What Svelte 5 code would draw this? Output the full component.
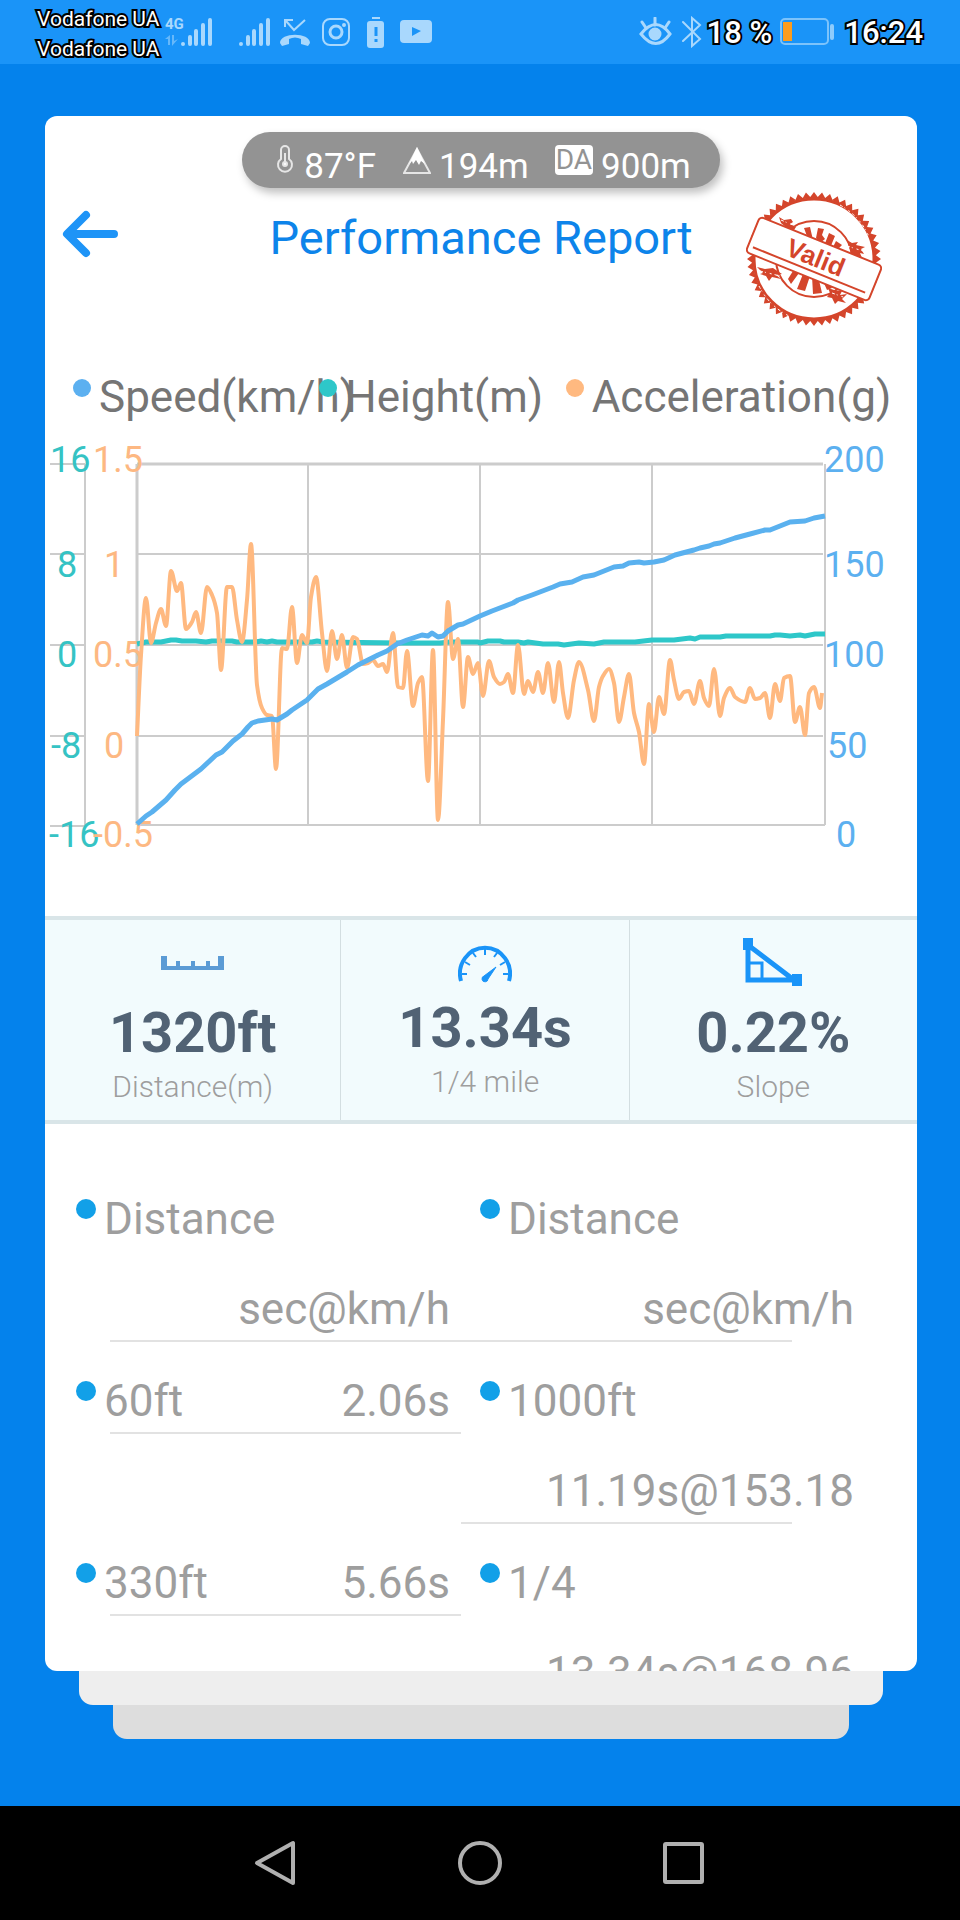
<script lang="ts">
  type Point = [number, number];

  const legend = [
    { label: 'Speed(km/h)', tone: 'speed' },
    { label: 'Height(m)', tone: 'height' },
    { label: 'Acceleration(g)', tone: 'accel' },
  ];

  const rows = [
    [{ label: '60ft', value: '2.06s' }, { label: '1000ft', value: '11.19s@153.18' }],
    [{ label: '330ft', value: '5.66s' }, { label: '1/4', value: '13.34s@168.96' }],
  ];

  // one entry per horizontal grid line, top to bottom
  const ticks = [
    { y: 472, height: ['16', 50], accel: ['1.5', 93], speed: ['200', 824] },
    { y: 577, height: ['8', 57], accel: ['1', 104], speed: ['150', 824] },
    { y: 667, height: ['0', 57], accel: ['0.5', 93], speed: ['100', 824] },
    { y: 758, height: ['-8', 51], accel: ['0', 104], speed: ['50', 827] },
    { y: 847, height: ['-16', 49], accel: ['-0.5', 93], speed: ['0', 836] },
  ];

  const speed: Point[] = [
    [137, 824], [146, 816], [152, 812], [166, 800], [175, 790], [181, 784], [201, 769], [216, 755],
    [222, 752], [233, 741], [242, 734], [248, 727], [252, 723], [258, 721], [272, 719], [277, 720],
    [287, 714], [292, 710], [307, 700], [312, 695], [318, 689], [327, 684], [337, 678], [347, 672],
    [358, 665], [368, 660], [378, 655], [387, 651], [397, 644], [407, 640], [413, 638], [422, 635],
    [428, 636], [432, 633], [438, 637], [443, 636], [448, 631], [458, 625], [463, 624], [480, 616],
    [492, 611], [513, 603], [518, 600], [532, 595], [553, 587], [560, 584], [572, 582], [583, 577],
    [594, 575], [614, 567], [623, 566], [629, 563], [639, 562], [644, 563], [654, 562], [664, 560],
    [675, 555], [694, 550], [700, 548], [709, 546], [714, 544], [720, 543], [735, 538], [750, 534],
    [765, 530], [770, 530], [780, 526], [790, 522], [805, 521], [814, 518], [825, 516],
  ];

  const height: Point[] = [
    [137, 644], [146, 642], [161, 642], [171, 640], [176, 640], [182, 641], [196, 641], [206, 642],
    [212, 641], [232, 641], [237, 642], [256, 642], [261, 641], [267, 642], [272, 641], [277, 642],
    [312, 642], [317, 641], [323, 642], [400, 643], [440, 643], [450, 642], [478, 642], [480, 643],
    [488, 641], [500, 641], [504, 642], [518, 642], [524, 643], [528, 642], [543, 644], [558, 644],
    [564, 645], [579, 643], [594, 644], [604, 642], [635, 642], [652, 640], [674, 640], [690, 638],
    [695, 639], [700, 637], [720, 637], [726, 636], [770, 636], [775, 635], [780, 635], [790, 636],
    [800, 635], [805, 636], [815, 634], [825, 634],
  ];

  const accel: Point[] = [
    [137, 736], [141, 655], [146, 598], [151, 643], [156, 623], [161, 609], [166, 626], [171, 571],
    [177, 591], [181, 583], [186, 629], [192, 622], [196, 612], [201, 633], [207, 587], [212, 595],
    [217, 613], [221, 670], [227, 587], [232, 587], [237, 620], [242, 642], [247, 600], [251, 544],
    [257, 685], [262, 708], [267, 715], [272, 716], [276, 769], [282, 648], [287, 649], [292, 607],
    [297, 663], [302, 635], [307, 643], [311, 597], [316, 577], [322, 633], [327, 671], [332, 631],
    [337, 659], [342, 635], [347, 668], [353, 637], [357, 639], [363, 664], [368, 663], [373, 660],
    [378, 666], [383, 664], [387, 672], [393, 633], [398, 687], [403, 688], [407, 651], [413, 706],
    [418, 683], [422, 677], [428, 781], [433, 650], [438, 820], [443, 720], [448, 602], [453, 659],
    [458, 639], [463, 707], [468, 657], [473, 674], [478, 663], [483, 696], [489, 661], [494, 677],
    [500, 684], [504, 682], [508, 674], [513, 693], [518, 645], [524, 694], [528, 681], [533, 692],
    [538, 672], [543, 693], [548, 663], [554, 702], [559, 662], [563, 693], [568, 718], [574, 680],
    [579, 662], [588, 690], [594, 721], [599, 687], [603, 676], [609, 669], [614, 683], [619, 722],
    [624, 697], [629, 674], [634, 713], [639, 732], [644, 764], [649, 704], [654, 732], [659, 697],
    [664, 714], [670, 660], [674, 680], [679, 699], [684, 692], [689, 691], [694, 704], [700, 681],
    [704, 698], [709, 706], [714, 669], [720, 716], [724, 698], [730, 688], [735, 697], [745, 702],
    [750, 688], [755, 699], [760, 698], [765, 693], [770, 718], [775, 684], [780, 701], [784, 678],
    [790, 676], [795, 722], [800, 707], [805, 735], [809, 693], [814, 687], [820, 708], [822, 693],
  ];

  function line(points: Point[]) {
    return 'M' + points.map((p) => p.join(' ')).join('L');
  }

  // monotone cubic: flat at peaks and troughs, never overshoots
  function smooth(points: Point[]) {
    const slope = (i: number) =>
      (points[i + 1][1] - points[i][1]) / (points[i + 1][0] - points[i][0]);
    const tangents = points.map((_, i) => {
      if (i === 0) return slope(0);
      if (i === points.length - 1) return slope(i - 1);
      const a = slope(i - 1);
      const b = slope(i);
      return a * b <= 0 ? 0 : (2 * a * b) / (a + b);
    });
    let d = `M${points[0].join(' ')}`;
    for (let i = 1; i < points.length; i++) {
      const [x0, y0] = points[i - 1];
      const [x1, y1] = points[i];
      const h = (x1 - x0) / 3;
      d += `C${x0 + h} ${y0 + tangents[i - 1] * h} ${x1 - h} ${y1 - tangents[i] * h} ${x1} ${y1}`;
    }
    return d;
  }

  const teeth = Array.from({ length: 104 }, (_, i) => {
    const angle = (i / 104) * Math.PI * 2;
    const r = i % 2 ? 62 : 67;
    return `${68 + r * Math.cos(angle)},${67 + r * Math.sin(angle)}`;
  }).join(' ');
</script>

{#snippet entry(label: string, value: string)}
  <div class="entry">
    <span class="entry-label"><i class="bullet"></i>{label}</span>
    <span class="entry-value">{value}</span>
  </div>
  <div class="rule"></div>
{/snippet}

{#snippet bars()}
  <svg class="bars" width="32" height="30" viewBox="0 0 32 30" stroke="#a9d8fd" stroke-width="4" stroke-linecap="round" aria-hidden="true">
    <path d="M2 27v0M9 27v-7M15 27V14M22 27V8M29 27V3" />
  </svg>
{/snippet}

<div class="screen">
  <header class="status">
    <div class="carriers">
      <span>Vodafone UA</span>
      <span>Vodafone UA</span>
    </div>
    <svg class="network" width="20" height="34" viewBox="0 0 20 34" aria-label="4G">
      <text x="0" y="14">4G</text>
      <g fill="#66b8fa">
        <path d="M5 20v10H3v-6H0z" />
        <path d="M7 20h2v6l4-2-6 7z" />
      </g>
    </svg>
    {@render bars()}
    <span class="spacer"></span>
    {@render bars()}
    <svg class="call" width="30" height="30" viewBox="0 0 30 30" aria-hidden="true">
      <path d="M25 3 14 13 6 4M5 10V3h8" fill="none" stroke="#a9d8fd" stroke-width="2" />
      <path d="M0 26c0-11 30-11 30 0l-2 3-7-2v-5c-4-2-8-2-12 0v5l-7 2z" fill="#a9d8fd" />
    </svg>
    <svg class="insta" width="28" height="28" viewBox="0 0 28 28" fill="none" stroke="#a9d8fd" stroke-width="2" aria-hidden="true">
      <rect x="1" y="1" width="26" height="26" rx="7" />
      <circle cx="14" cy="14" r="6" stroke-width="3" />
      <circle cx="22" cy="7" r="1" />
    </svg>
    <svg class="low" width="17" height="31" viewBox="0 0 17 31" aria-hidden="true">
      <path d="M5 1h8" stroke="#a9d8fd" stroke-width="2" />
      <rect y="4" width="17" height="27" rx="3" fill="#a9d8fd" />
      <path d="M9 10v9M9 22v3" stroke="#1a94f8" stroke-width="3" />
    </svg>
    <svg class="tube" width="32" height="24" viewBox="0 0 32 24" aria-hidden="true">
      <rect width="32" height="23" rx="4" fill="#a9d8fd" />
      <path d="m12 7 9 4-9 5z" fill="#1a94f8" />
    </svg>

    <svg class="eye" width="33" height="30" viewBox="0 0 33 30" fill="none" stroke="#a9d8fd" stroke-width="3" aria-hidden="true">
      <path d="M2 17q15-19 29 0-14 19-29 0z" />
      <circle cx="16" cy="17" r="5" fill="#a9d8fd" />
      <path d="M16 8V1M7 11 3 5M26 11l4-6" stroke-linecap="round" />
    </svg>
    <svg class="bluetooth" width="20" height="32" viewBox="0 0 20 32" fill="none" stroke="#a9d8fd" stroke-width="2" aria-hidden="true">
      <path d="m1 6 17 17-8 7V2l8 7L1 25" stroke-linecap="round" />
    </svg>
    <span class="clock">18 %</span>
    <svg class="battery" width="55" height="28" viewBox="0 0 55 28" aria-hidden="true">
      <rect x="1" y="1" width="47" height="25" rx="4" fill="none" stroke="#7cc3fb" stroke-width="2" />
      <rect x="3" y="4" width="9" height="19" fill="#fc9c1c" />
      <rect x="50" y="6" width="4" height="16" rx="2" fill="#8fccfc" />
    </svg>
    <span class="clock">16:24</span>
  </header>

  <main>
    <section class="card">
      <div class="weather">
        <svg class="thermo" width="18" height="28" viewBox="0 0 18 28" fill="none" stroke="#e6e6e6" stroke-width="2" aria-hidden="true">
          <path d="M5 14V5a4 4 0 0 1 8 0v9a7 7 0 1 1-8 0z" />
          <path d="M9 8v10" />
          <circle cx="9" cy="19" r="2" fill="#fff" />
        </svg>
        <span>87°F</span>
        <svg class="peak" width="28" height="28" viewBox="0 0 28 28" aria-hidden="true">
          <path d="M14 2 1 26h26z" fill="none" stroke="#e6e6e6" stroke-width="2" />
          <path d="m14 0 8 17-4-3-2 4-3-5-3 4-1-3-3 3z" fill="#fff" />
        </svg>
        <span>194m</span>
        <span class="da">DA</span>
        <span>900m</span>
      </div>

      <div class="head">
        <button class="back" aria-label="Back">
          <svg width="56" height="48" viewBox="0 0 56 48" fill="none" stroke="#1e94f7" stroke-width="8" stroke-linecap="round" stroke-linejoin="round">
            <path d="M24 5 5 24l19 19M7 24h45" />
          </svg>
        </button>
        <h1>Performance Report</h1>
        <svg class="stamp" width="136" height="134" viewBox="0 0 136 134" role="img" aria-label="Valid">
          <polygon points={teeth} fill="#d4452b" />
          <circle cx="68" cy="67" r="61" fill="#fff" />
          <circle cx="68" cy="67" r="60" fill="none" stroke="#d4452b" stroke-width="3" />
          <circle cx="68" cy="67" r="38" fill="none" stroke="#d4452b" stroke-width="2" />
          <g fill="#d4452b">
            <path d="m58 36 6-1 3 13-5-1zM72 36l6 1-2 6 3 4-5 4-4-5zM83 41l6 3-5 12-6-2zM90 49l6 4-6 6-4-2z" />
            <path d="m42 87 5-8 6 2-8 11zM51 97l6-15 7 2-5 15zM66 84h6l4 17-9 1zM77 89l6 1 3 6-5 2z" />
            <path d="m33 25 5 3 7-1 2 3-3 2 6 3-2 3-7-2-6-5zM101 48l5 3 6-1-2 3 9 2-4 2 3 5-4-1 2 5-8-2-4-6zM11 75l8 2 8-1 9 6-6 1 5 4-9-2-3 4-3-5-6-2 3-1zM82 96l6 2 8 1-2 4 7-1-5 5 4 4-8-2-3 3-3-6-5-1 3-4z" />
          </g>
          <g stroke="#fff" stroke-width="1" stroke-dasharray="3 2 1 4 2 3" fill="none">
            <path d="M94 13q21 12 29 32M13 94q10 20 30 30M35 28l14 6M101 54l16 5M14 79l20 5M86 101l14 5" />
          </g>
          <g transform="rotate(22 68 67)">
            <rect x="2" y="48" width="132" height="38" rx="4" fill="#fff" stroke="#d4452b" stroke-width="2" />
            <path d="M7 79h121" stroke="#d4452b" stroke-width="2" />
            <text x="69" y="74" text-anchor="middle">Valid</text>
          </g>
        </svg>
      </div>

      <ul class="legend">
        {#each legend as item}
          <li><i class="dot {item.tone}"></i><span>{item.label}</span></li>
        {/each}
      </ul>

      <svg class="chart" viewBox="45 423 872 493" role="img" aria-label="Speed, height and acceleration">
        <g class="grid">
          <path d="M137 554H823M137 645H823M137 736H823M137 825H825M308 464V825M480 464V825M652 464V825M825 464V825" />
          <path d="M50 464H85M50 554H85M50 645H85M50 736H85M50 826H85M85 464V826" />
          <path class="strong" d="M137 464H823M137 464V825" />
        </g>
        {#each ticks as tick}
          <text class="height" x={tick.height[1]} y={tick.y}>{tick.height[0]}</text>
          <text class="accel" x={tick.accel[1]} y={tick.y}>{tick.accel[0]}</text>
          <text class="speed" x={tick.speed[1]} y={tick.y}>{tick.speed[0]}</text>
        {/each}
        <g class="series">
          <path class="height" d={line(height)} />
          <path class="accel" d={smooth(accel)} />
          <path class="speed" d={line(speed)} />
        </g>
      </svg>

      <div class="stats">
        <div class="stat">
          <svg width="64" height="52" viewBox="0 0 64 52" fill="#5b9bd5" aria-hidden="true">
            <path d="M0 19h6v10h9v-5h4v5h11v-5h4v5h11v-5h4v5h8V19h6v14H0z" />
          </svg>
          <strong>1320ft</strong>
          <span>Distance(m)</span>
        </div>
        <div class="stat">
          <svg width="54" height="47" viewBox="0 0 54 47" fill="none" stroke="#1a94f8" aria-hidden="true">
            <path d="M3 44A25 26 0 1 1 51 44" stroke-width="4" />
            <path d="M4 37h5M7 25l5 3M15 16l3 4M27 12v6M39 16l-3 4M47 25l-5 3M50 37h-5" stroke-width="2" />
            <path d="m38 30-12 9a3 3 0 1 0 4 3z" fill="#1a94f8" stroke-width="1" />
          </svg>
          <strong>13.34s</strong>
          <span>1/4 mile</span>
        </div>
        <div class="stat">
          <svg width="60" height="52" viewBox="0 0 60 52" fill="none" stroke="#1a94f8" aria-hidden="true">
            <path d="M5 8v35h46z" stroke-width="5" />
            <path d="M7 26h12v16" stroke-width="3" />
            <path d="M0 1h10v12H0zM49 37h10v12H49z" fill="#1a94f8" stroke="none" />
          </svg>
          <strong>0.22%</strong>
          <span>Slope</span>
        </div>
      </div>

      <table>
        <thead>
          <tr>
            <th>{@render entry('Distance', 'sec@km/h')}</th>
            <th>{@render entry('Distance', 'sec@km/h')}</th>
          </tr>
        </thead>
        <tbody>
          {#each rows as row}
            <tr>
              {#each row as cell}
                <td>{@render entry(cell.label, cell.value)}</td>
              {/each}
            </tr>
          {/each}
        </tbody>
      </table>
    </section>
    <div class="sheet near"></div>
    <div class="sheet far"></div>
  </main>

  <nav>
    <button aria-label="Back">
      <svg width="44" height="46" viewBox="0 0 44 46"><path d="M39 3v40L3 23z" /></svg>
    </button>
    <button aria-label="Home">
      <svg width="44" height="46" viewBox="0 0 44 46"><circle cx="22" cy="23" r="20" /></svg>
    </button>
    <button aria-label="Recent apps">
      <svg width="44" height="46" viewBox="0 0 44 46"><rect x="3" y="4" width="37" height="38" rx="1" /></svg>
    </button>
  </nav>
</div>

<style>
  :global(body) {
    margin: 0;
  }
  .screen {
    display: flex;
    flex-direction: column;
    height: 100vh;
    background: #0482ec;
    font-family: Roboto, "Liberation Sans", sans-serif;
  }
  svg {
    display: block;
    flex: none;
  }
  button {
    background: none;
    border: none;
    padding: 0;
    cursor: pointer;
  }

  .status {
    display: flex;
    align-items: center;
    height: 64px;
    padding: 0 37px;
    background: #1a94f8;
    color: #fff;
    flex: none;
  }
  .carriers {
    display: flex;
    flex-direction: column;
    padding-top: 4px;
    margin-right: 6px;
    font-size: 21px;
    line-height: 30px;
  }
  .carriers span,
  .clock {
    -webkit-text-stroke: 4px #000;
    paint-order: stroke fill;
    white-space: nowrap;
  }
  .network text {
    font-size: 15px;
    font-weight: 700;
    fill: #a9d8fd;
  }
  .network {
    overflow: visible;
    margin-right: -4px;
  }
  .spacer {
    width: 26px;
  }
  .call {
    margin-left: 9px;
  }
  .insta {
    margin-left: 12px;
  }
  .low {
    margin-left: 17px;
  }
  .tube {
    margin-left: 16px;
  }
  .eye {
    margin-left: auto;
  }
  .bluetooth {
    margin: 0 5px 0 10px;
  }
  .clock {
    font-size: 31px;
    font-weight: 500;
  }
  .battery {
    margin: 0 9px 0 8px;
  }

  main {
    flex: 1;
    min-height: 0;
    display: flex;
    flex-direction: column;
    padding: 52px 43px 67px 45px;
  }
  .card {
    flex: 1;
    min-height: 0;
    overflow: hidden;
    background: #fff;
    border-radius: 12px;
  }
  .sheet {
    height: 34px;
    flex: none;
    border-radius: 0 0 14px 14px;
  }
  .near {
    margin: 0 34px;
    background: #eee;
  }
  .far {
    margin: 0 68px;
    background: #ddd;
  }

  .weather {
    display: flex;
    align-items: flex-start;
    width: fit-content;
    height: 43px;
    margin: 16px auto 0;
    padding: 13px 29px 0 34px;
    border-radius: 28px;
    background: #939393;
    box-shadow: 3px 5px 9px rgba(0, 0, 0, 0.25);
    color: #fff;
    font-size: 35px;
    line-height: 44px;
  }
  .thermo {
    margin-right: 10px;
  }
  .peak {
    margin: 2px 8px 0 27px;
  }
  .weather .da {
    margin: 0 8px 0 26px;
    padding: 0 1px;
    border-radius: 4px;
    background: #fff;
    color: #939393;
    font-size: 28px;
    line-height: 30px;
  }

  .head {
    display: grid;
    grid-template-columns: 1fr auto 1fr;
    align-items: start;
    margin-top: 4px;
  }
  .back {
    justify-self: start;
    margin: 18px 0 0 17px;
  }
  h1 {
    margin: 18px 0 0;
    color: #0d84ea;
    font-size: 47px;
    font-weight: 400;
    line-height: 56px;
  }
  .stamp {
    justify-self: end;
    margin-right: 35px;
  }
  .stamp text {
    fill: #d4452b;
    font-family: "Liberation Sans", sans-serif;
    font-size: 26px;
    font-weight: 700;
  }

  .legend {
    display: grid;
    grid-template-columns: repeat(3, 1fr);
    margin: 45px 105px 0 28px;
    padding: 0;
    list-style: none;
    color: #757575;
    font-size: 44px;
    line-height: 52px;
  }
  .legend li {
    display: flex;
    min-width: 0;
    white-space: nowrap;
  }
  .dot {
    flex: none;
    z-index: 1;
    width: 18px;
    height: 18px;
    margin: 8px 8px 0 0;
    border-radius: 50%;
  }
  .dot.speed {
    background: #5cb0f0;
  }
  .dot.height {
    background: #2ec7c9;
  }
  .dot.accel {
    background: #ffb980;
  }

  .chart {
    width: 100%;
    font-size: 36px;
  }
  .grid {
    fill: none;
    stroke: #ccc;
    stroke-width: 2;
  }
  .grid .strong {
    stroke-width: 3;
  }
  text.speed {
    fill: #5cb0f0;
  }
  text.height {
    fill: #35c3c4;
  }
  text.accel {
    fill: #fdb882;
  }
  .series {
    fill: none;
    stroke-width: 5;
    stroke-linejoin: round;
  }
  .series .height {
    stroke: #2ec7c9;
  }
  .series .accel {
    stroke: #ffb980;
    stroke-width: 4;
  }
  .series .speed {
    stroke: #5ab1ef;
  }

  .stats {
    display: grid;
    grid-template-columns: 41fr 40fr 40fr;
    border-top: 4px solid #d9e5e8;
    border-bottom: 4px solid #d9e5e8;
    background: #f2fbfd;
  }
  .stat {
    display: flex;
    flex-direction: column;
    align-items: center;
    padding: 17px 0 15px;
  }
  .stat + .stat {
    border-left: 1px solid #d3dee1;
  }
  .stat strong {
    margin: 14px 0 6px;
    color: #516274;
    font-size: 56px;
    line-height: 60px;
  }
  .stat span {
    color: #9e9e9e;
    font-size: 30px;
    font-weight: 300;
    line-height: 36px;
  }

  table {
    width: calc(100% - 64px);
    margin: 36px 0 0 31px;
    border-collapse: collapse;
    table-layout: fixed;
    color: #9e9e9e;
    font-size: 44px;
  }
  th,
  td {
    padding: 0;
    font-weight: 400;
    vertical-align: top;
    text-align: left;
  }
  .entry {
    display: flex;
    flex-wrap: wrap;
    margin-right: 30px;
    line-height: 62px;
  }
  .entry-label,
  .entry-value {
    display: flex;
    padding-top: 28px;
    white-space: nowrap;
  }
  .entry-value {
    margin-left: auto;
  }
  .bullet {
    width: 20px;
    height: 20px;
    margin: 11px 8px 0 0;
    border-radius: 50%;
    background: #12a0e8;
  }
  .rule {
    height: 2px;
    margin: 0 19px 0 34px;
    background: #e2e2e2;
  }
  th + th .rule,
  td + td .rule {
    margin: 0 92px 0 -19px;
  }

  nav {
    display: flex;
    align-items: center;
    justify-content: center;
    gap: 160px;
    height: 114px;
    flex: none;
    background: #000;
  }
  nav svg {
    fill: none;
    stroke: #b0b0b0;
    stroke-width: 4;
    stroke-linejoin: round;
  }
</style>
